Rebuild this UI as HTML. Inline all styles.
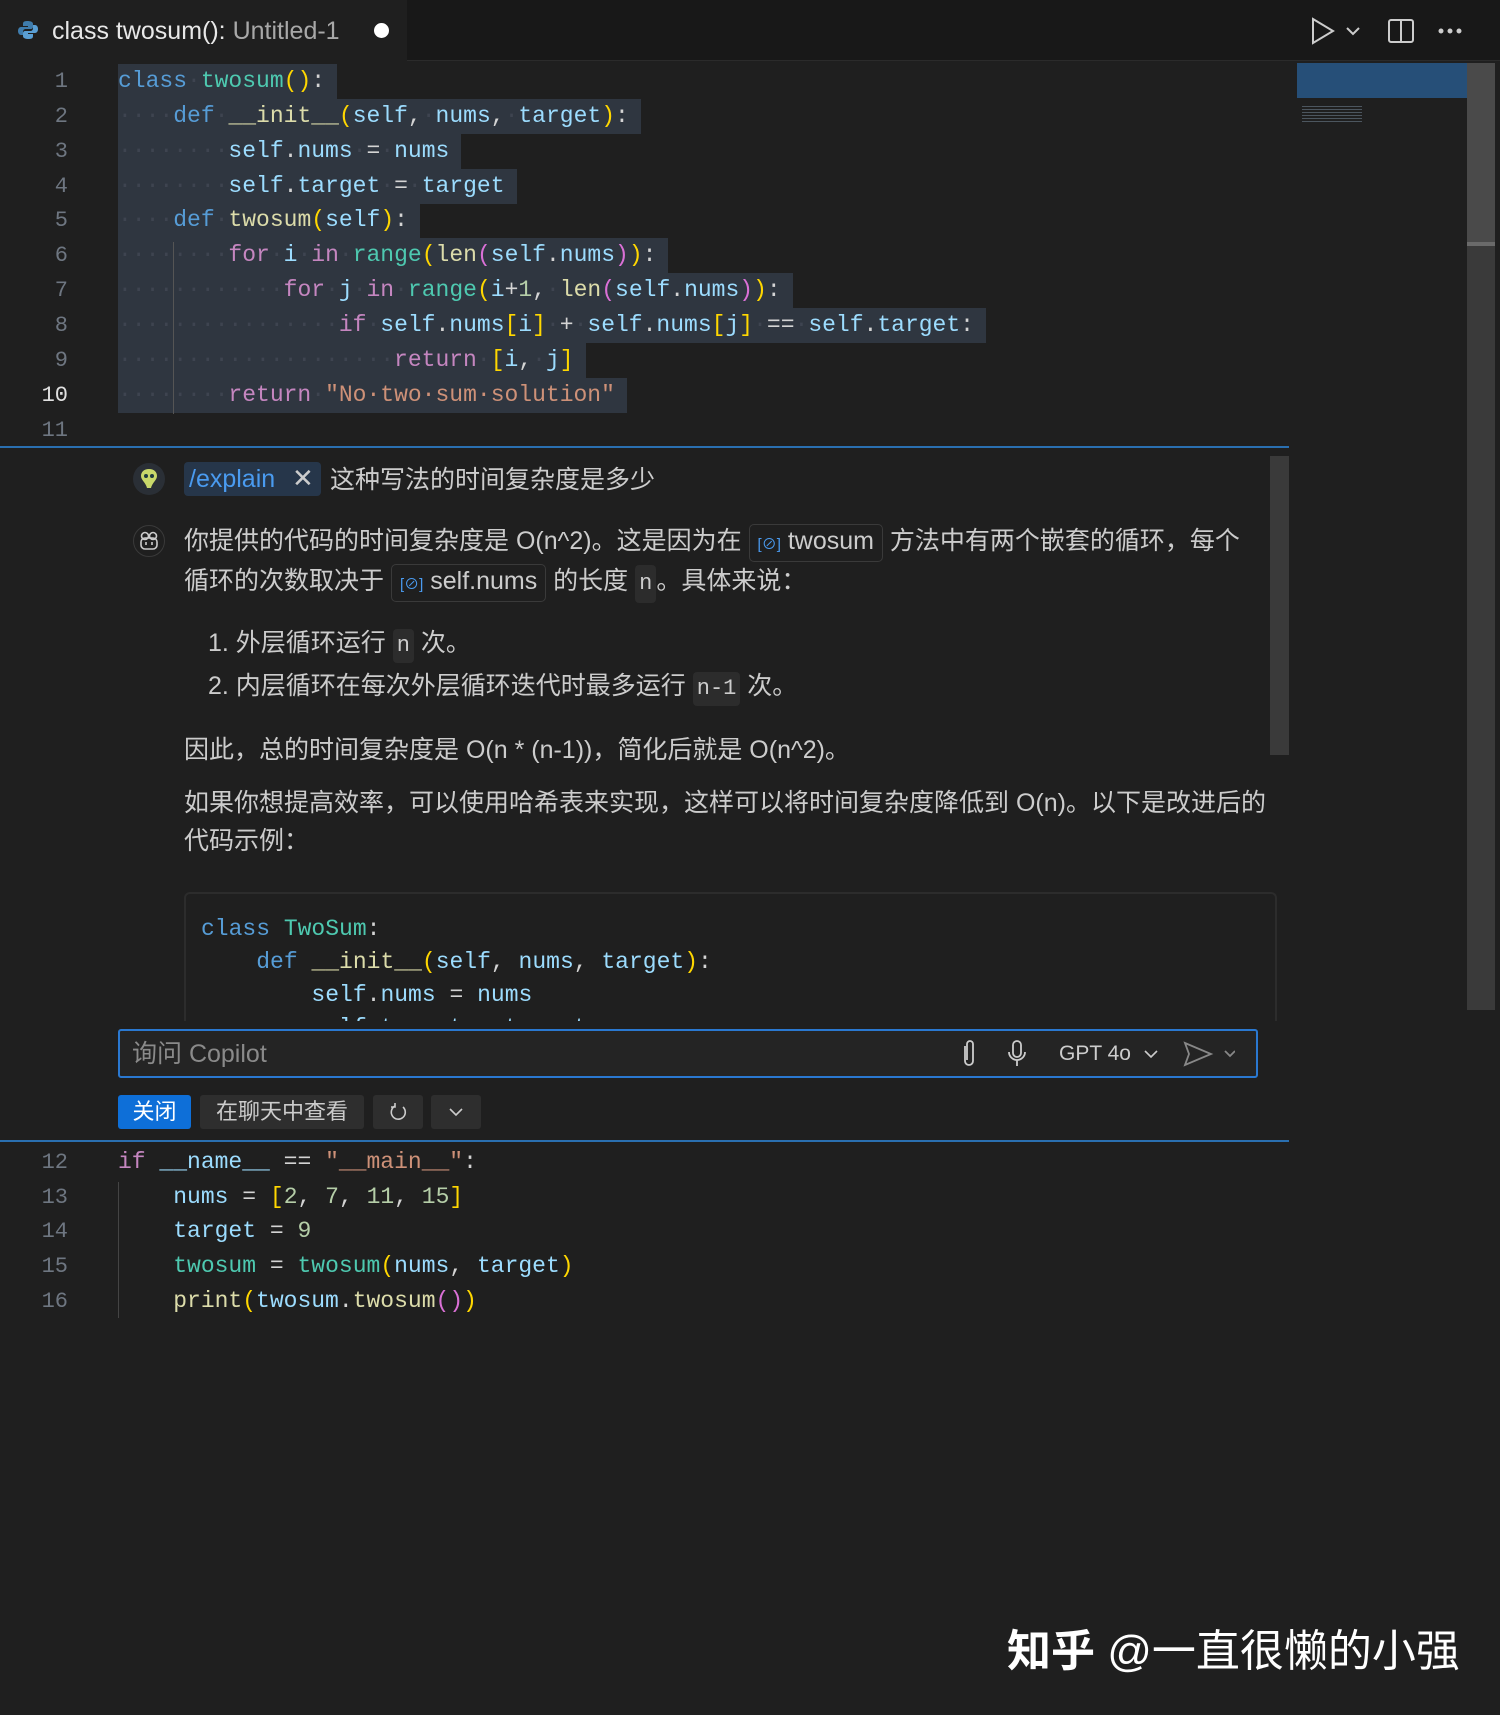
<!DOCTYPE html>
<html><head><meta charset="utf-8"><style>
*{margin:0;padding:0;box-sizing:border-box}
body{width:1500px;height:1715px;background:#1f1f1f;overflow:hidden;position:relative;font-family:"Liberation Sans","Noto Sans CJK SC",sans-serif;color:#cccccc}
.abs{position:absolute}
.mono{font-family:"Liberation Mono","DejaVu Sans Mono",monospace;font-size:23px;white-space:pre;letter-spacing:0}
.ln{position:absolute;left:0;width:68px;text-align:right;color:#6e7681;font-family:"Liberation Mono",monospace;font-size:22px}
.cl{position:absolute;left:118px;height:35px;line-height:35px}
.sel{background:#2f3640;padding-right:12px}
.k{color:#569cd6}.c{color:#4ec9b0}.f{color:#dcdcaa}.v{color:#9cdcfe}.p{color:#ffd700}.m{color:#da70d6}.ctl{color:#c586c0}.s{color:#ce9178}.n{color:#b5cea8}.w{color:#d4d4d4}.d{color:#3e4450}
.cjk{font-size:25px;color:#cccccc}
.chip{display:inline-block;border:1px solid #3a3a3a;border-radius:5px;padding:0 8px;background:#1f1f1f;line-height:32px}
.ic{display:inline-block;background:#2c2c2c;border-radius:4px;padding:0 4px;font-family:"Liberation Mono",monospace;font-size:22px}
</style></head><body>
<div class="abs" style="left:0;top:0;width:1500px;height:61px;background:#181818;border-bottom:1px solid #2b2b2b"></div>
<div class="abs" style="left:0;top:0;width:407px;height:62px;background:#1f1f1f"></div>
<svg class="abs" style="left:17px;top:19px" width="22" height="22" viewBox="0 0 22 22"><path d="M10 2c-4 0-4 2-4 3v2h5v1H4c-2 0-3 2-3 4s1 4 3 4h2v-3c0-2 1-3 3-3h5c1 0 2-1 2-2V5c0-2-2-3-6-3z" fill="#3f7cac"/><path d="M12 20c4 0 4-2 4-3v-2h-5v-1h7c2 0 3-2 3-4s-1-4-3-4h-2v3c0 2-1 3-3 3H8c-1 0-2 1-2 2v3c0 2 2 3 6 3z" fill="#5a9fd4"/></svg>
<div class="abs" style="left:52px;top:17px;font-size:25px;color:#e8e8e8">class twosum(): <span style="color:#a8a8a8">Untitled-1</span></div>
<div class="abs" style="left:374px;top:23px;width:15px;height:15px;border-radius:50%;background:#fff"></div>
<svg class="abs" style="left:1310px;top:16px" width="180" height="30" viewBox="0 0 180 30" fill="none" stroke="#cccccc" stroke-width="2"><path d="M3 3l20 12L3 27z"/><path d="M37 12l6 6 6-6"/><rect x="79" y="4" width="24" height="22" rx="2"/><path d="M91 4v22"/><circle cx="131" cy="15" r="1.5" fill="#ccc"/><circle cx="140" cy="15" r="1.5" fill="#ccc"/><circle cx="149" cy="15" r="1.5" fill="#ccc"/></svg>
<div class="abs" style="left:1297px;top:63px;width:170px;height:35px;background:#264f78"></div>
<div class="abs" style="left:1302px;top:104px;width:60px;height:20px;background:repeating-linear-gradient(#1f1f1f 0 2px,#6a7a8a 2px 3px);opacity:.6"></div>
<div class="abs" style="left:1467px;top:63px;width:28px;height:947px;background:#3a3a3a"></div>
<div class="abs" style="left:1467px;top:63px;width:28px;height:180px;background:#4a4a4a"></div>
<div class="abs" style="left:1467px;top:242px;width:28px;height:4px;background:#6a6a6a"></div>

<div class="mono">
<div class="ln" style="top:64px;line-height:35px">1</div>
<div class="ln" style="top:99px;line-height:35px">2</div>
<div class="ln" style="top:134px;line-height:35px">3</div>
<div class="ln" style="top:169px;line-height:35px">4</div>
<div class="ln" style="top:203px;line-height:35px">5</div>
<div class="ln" style="top:238px;line-height:35px">6</div>
<div class="ln" style="top:273px;line-height:35px">7</div>
<div class="ln" style="top:308px;line-height:35px">8</div>
<div class="ln" style="top:343px;line-height:35px">9</div>
<div class="ln" style="top:378px;line-height:35px;color:#e0e0e0">10</div>
<div class="ln" style="top:413px;line-height:35px">11</div>

<div class="cl sel" style="top:64px"><span class="k">class</span><span class="d">·</span><span class="c">twosum</span><span class="p">()</span><span class="w">:</span></div>
<div class="cl sel" style="top:99px"><span class="d">····</span><span class="k">def</span><span class="d">·</span><span class="f">__init__</span><span class="p">(</span><span class="v">self</span><span class="w">,</span><span class="d">·</span><span class="v">nums</span><span class="w">,</span><span class="d">·</span><span class="v">target</span><span class="p">)</span><span class="w">:</span></div>
<div class="cl sel" style="top:134px"><span class="d">········</span><span class="v">self</span><span class="w">.</span><span class="v">nums</span><span class="d">·</span><span class="w">=</span><span class="d">·</span><span class="v">nums</span></div>
<div class="cl sel" style="top:169px"><span class="d">········</span><span class="v">self</span><span class="w">.</span><span class="v">target</span><span class="d">·</span><span class="w">=</span><span class="d">·</span><span class="v">target</span></div>
<div class="cl sel" style="top:203px"><span class="d">····</span><span class="k">def</span><span class="d">·</span><span class="f">twosum</span><span class="p">(</span><span class="v">self</span><span class="p">)</span><span class="w">:</span></div>
<div class="cl sel" style="top:238px"><span class="d">········</span><span class="ctl">for</span><span class="d">·</span><span class="v">i</span><span class="d">·</span><span class="ctl">in</span><span class="d">·</span><span class="c">range</span><span class="p">(</span><span class="f">len</span><span class="m">(</span><span class="v">self</span><span class="w">.</span><span class="v">nums</span><span class="m">)</span><span class="p">)</span><span class="w">:</span></div>
<div class="cl sel" style="top:273px"><span class="d">············</span><span class="ctl">for</span><span class="d">·</span><span class="v">j</span><span class="d">·</span><span class="ctl">in</span><span class="d">·</span><span class="c">range</span><span class="p">(</span><span class="v">i</span><span class="w">+</span><span class="n">1</span><span class="w">,</span><span class="d">·</span><span class="f">len</span><span class="m">(</span><span class="v">self</span><span class="w">.</span><span class="v">nums</span><span class="m">)</span><span class="p">)</span><span class="w">:</span></div>
<div class="cl sel" style="top:308px"><span class="d">················</span><span class="ctl">if</span><span class="d">·</span><span class="v">self</span><span class="w">.</span><span class="v">nums</span><span class="p">[</span><span class="v">i</span><span class="p">]</span><span class="d">·</span><span class="w">+</span><span class="d">·</span><span class="v">self</span><span class="w">.</span><span class="v">nums</span><span class="p">[</span><span class="v">j</span><span class="p">]</span><span class="d">·</span><span class="w">==</span><span class="d">·</span><span class="v">self</span><span class="w">.</span><span class="v">target</span><span class="w">:</span></div>
<div class="cl sel" style="top:343px"><span class="d">····················</span><span class="ctl">return</span><span class="d">·</span><span class="p">[</span><span class="v">i</span><span class="w">,</span><span class="d">·</span><span class="v">j</span><span class="p">]</span></div>
<div class="cl sel" style="top:378px"><span class="d">········</span><span class="ctl">return</span><span class="d">·</span><span class="s">"No·two·sum·solution"</span></div>
</div>
<div class="abs" style="left:173px;top:242px;width:1px;height:172px;background:#555"></div>

<div class="abs" style="left:0;top:446px;width:1289px;height:2px;background:#2a6fb0"></div>
<div class="abs" style="left:1270px;top:456px;width:19px;height:299px;background:#3a3a3a"></div>
<div class="abs" style="left:133px;top:463px;width:32px;height:32px;border-radius:50%;background:#2a2f36"></div>
<svg class="abs" style="left:139px;top:468px" width="20" height="22" viewBox="0 0 20 22"><path d="M10 1C5 1 2 4 2 8c0 4 5 7 6 12h4c1-5 6-8 6-12 0-4-3-7-8-7z" fill="#c8d86a"/><circle cx="7" cy="8" r="2" fill="#1e3a40"/><circle cx="13" cy="8" r="2" fill="#1e3a40"/></svg>
<div class="abs" style="left:184px;top:462px;width:137px;height:34px;background:#26364a;border-radius:4px"></div>
<div class="abs" style="left:189px;top:464px;font-size:25px;color:#4a9bf0;line-height:30px">/explain</div>
<div class="abs" style="left:292px;top:462px;font-size:26px;color:#ccc;line-height:32px">✕</div>
<div class="abs cjk" style="left:330px;top:464px;line-height:32px">这种写法的时间复杂度是多少</div>

<div class="abs" style="left:133px;top:525px;width:32px;height:32px;border-radius:50%;border:1px solid #3a3a3a"></div>
<svg class="abs" style="left:138px;top:530px" width="22" height="22" viewBox="0 0 22 22" fill="none" stroke="#ccc" stroke-width="1.6"><rect x="3" y="8" width="16" height="11" rx="4"/><circle cx="7" cy="6" r="3.5"/><circle cx="15" cy="6" r="3.5"/><path d="M8 12v3M14 12v3"/></svg>
<div class="abs cjk" style="left:184px;top:522px;width:1092px;line-height:38px">你提供的代码的时间复杂度是 O(n^2)。这是因为在 <span class="chip"><span style="color:#4a9bf0;font-size:15px">[⊘]</span> twosum</span> 方法中有两个嵌套的循环，每个<br>循环的次数取决于 <span class="chip"><span style="color:#4a9bf0;font-size:15px">[⊘]</span> self.nums</span> 的长度 <span class="ic">n</span>。具体来说：</div>
<div class="abs cjk" style="left:208px;top:626px;line-height:34px">1. 外层循环运行 <span class="ic">n</span> 次。</div>
<div class="abs cjk" style="left:208px;top:669px;line-height:34px">2. 内层循环在每次外层循环迭代时最多运行 <span class="ic">n-1</span> 次。</div>
<div class="abs cjk" style="left:184px;top:733px;line-height:34px">因此，总的时间复杂度是 O(n * (n-1))，简化后就是 O(n^2)。</div>
<div class="abs cjk" style="left:184px;top:784px;width:1095px;line-height:38px">如果你想提高效率，可以使用哈希表来实现，这样可以将时间复杂度降低到 O(n)。以下是改进后的<br>代码示例：</div>
<div class="abs" style="left:184px;top:892px;width:1093px;height:130px;border:2px solid #2c2c2c;border-bottom:none;border-radius:6px 6px 0 0;overflow:hidden">
 <div class="mono" style="position:absolute;left:15px;top:19px;line-height:33px;font-size:23px"><span class="k">class</span> <span class="c">TwoSum</span><span class="w">:</span>
    <span class="k">def</span> <span class="f">__init__</span><span class="p">(</span><span class="v">self</span><span class="w">,</span> <span class="v">nums</span><span class="w">,</span> <span class="v">target</span><span class="p">)</span><span class="w">:</span>
        <span class="v">self</span><span class="w">.</span><span class="v">nums</span> <span class="w">=</span> <span class="v">nums</span>
        <span class="v">self</span><span class="w">.</span><span class="v">target</span> <span class="w">=</span> <span class="v">target</span></div>
</div>
<div class="abs" style="left:0;top:1021px;width:1289px;height:8px;background:#1f1f1f"></div>
<div class="abs" style="left:118px;top:1029px;width:1140px;height:49px;border:2px solid #2a78d0;border-radius:3px;background:#242424"></div>
<div class="abs" style="left:132px;top:1039px;font-size:25px;color:#8a8a8a;line-height:30px">询问 Copilot</div>
<svg class="abs" style="left:955px;top:1038px" width="280" height="32" viewBox="0 0 280 32" fill="none" stroke="#cccccc" stroke-width="1.8"><path d="M10 8v15a4 4 0 008 0V6a3 3 0 00-6 0v16"/><rect x="58" y="3" width="8" height="16" rx="4"/><path d="M54 14a8 8 0 0016 0M62 22v6"/><path d="M230 5l26 11-26 11 4-11z" stroke="#888"/><path d="M270 13l5 5 5-5" stroke="#888"/></svg>
<div class="abs" style="left:1059px;top:1039px;font-size:21px;color:#ccc;line-height:30px">GPT 4o</div>
<svg class="abs" style="left:1144px;top:1048px" width="14" height="12" viewBox="0 0 14 12" fill="none" stroke="#ccc" stroke-width="1.6"><path d="M1 3l6 6 6-6"/></svg>
<div class="abs" style="left:118px;top:1095px;width:73px;height:34px;background:#0e6fd8;border-radius:3px;color:#fff;font-size:22px;line-height:34px;text-align:center">关闭</div>
<div class="abs" style="left:200px;top:1095px;width:164px;height:34px;background:#2e2e2e;border-radius:3px;color:#ccc;font-size:22px;line-height:34px;text-align:center">在聊天中查看</div>
<div class="abs" style="left:373px;top:1095px;width:50px;height:34px;background:#2e2e2e;border-radius:3px"></div>
<svg class="abs" style="left:387px;top:1101px" width="22" height="22" viewBox="0 0 22 22" fill="none" stroke="#ccc" stroke-width="1.6"><path d="M16 6a7 7 0 11-8-1M8 2v4H4"/></svg>
<div class="abs" style="left:431px;top:1095px;width:50px;height:34px;background:#2e2e2e;border-radius:3px"></div>
<svg class="abs" style="left:448px;top:1107px" width="16" height="10" viewBox="0 0 16 10" fill="none" stroke="#ccc" stroke-width="1.6"><path d="M2 2l6 6 6-6"/></svg>
<div class="abs" style="left:0;top:1140px;width:1289px;height:2px;background:#2a6fb0"></div>

<div class="mono">
<div class="ln" style="top:1145px;line-height:35px">12</div>
<div class="ln" style="top:1180px;line-height:35px">13</div>
<div class="ln" style="top:1214px;line-height:35px">14</div>
<div class="ln" style="top:1249px;line-height:35px">15</div>
<div class="ln" style="top:1284px;line-height:35px">16</div>
<div class="cl" style="top:1145px"><span class="ctl">if</span> <span class="v">__name__</span> <span class="w">==</span> <span class="s">"__main__"</span><span class="w">:</span></div>
<div class="cl" style="top:1180px">    <span class="v">nums</span> <span class="w">=</span> <span class="p">[</span><span class="n">2</span><span class="w">,</span> <span class="n">7</span><span class="w">,</span> <span class="n">11</span><span class="w">,</span> <span class="n">15</span><span class="p">]</span></div>
<div class="cl" style="top:1214px">    <span class="v">target</span> <span class="w">=</span> <span class="n">9</span></div>
<div class="cl" style="top:1249px">    <span class="c">twosum</span> <span class="w">=</span> <span class="c">twosum</span><span class="p">(</span><span class="v">nums</span><span class="w">,</span> <span class="v">target</span><span class="p">)</span></div>
<div class="cl" style="top:1284px">    <span class="f">print</span><span class="p">(</span><span class="v">twosum</span><span class="w">.</span><span class="f">twosum</span><span class="m">()</span><span class="p">)</span></div>
</div>
<div class="abs" style="left:118px;top:1182px;width:1px;height:136px;background:#444"></div>

<div class="abs" style="left:1007px;top:1626px;font-size:44px;color:#ffffff;line-height:52px;font-weight:bold">知乎 <span style="font-weight:normal">@一直很懒的小强</span></div>
</body></html>
